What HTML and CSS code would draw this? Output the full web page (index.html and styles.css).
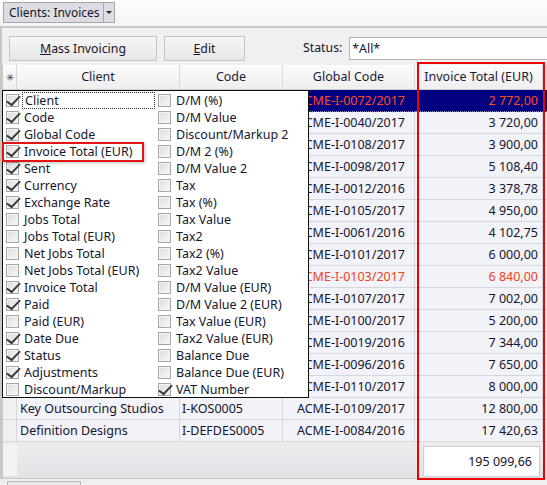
FILE: index.html
```html
<!DOCTYPE html>
<html>
<head>
<meta charset="utf-8">
<link rel="stylesheet" href="styles.css">
</head>
<body>
<div class="app">
  <div class="toolbar">
    <div class="dd"><span class="dd-label">Clients: Invoices</span><span class="dd-btn"><span class="dd-arrow"></span></span></div>
  </div>
  <div class="actions">
    <div class="btn btn-mass"><u>M</u>ass Invoicing</div>
    <div class="btn btn-edit"><u>E</u>dit</div>
    <span class="status-label">Status:</span>
    <div class="status-input">*All*</div>
  </div>
  <div class="grid">
    <div class="row head">
      <div class="c ind">&#x2733;</div>
      <div class="c">Client</div>
      <div class="c">Code</div>
      <div class="c">Global Code</div>
      <div class="c">Invoice Total (EUR)</div>
      <div class="c fill"></div>
    </div>
    <div class="row sel"><div class="c ind"></div><div class="c client"></div><div class="c code"></div><div class="c gc">ACME-I-0072/2017</div><div class="c tot">2 772,00</div><div class="c fill"></div></div>
    <div class="row"><div class="c ind"></div><div class="c client"></div><div class="c code"></div><div class="c gc">ACME-I-0040/2017</div><div class="c tot">3 720,00</div><div class="c fill"></div></div>
    <div class="row"><div class="c ind"></div><div class="c client"></div><div class="c code"></div><div class="c gc">ACME-I-0108/2017</div><div class="c tot">3 900,00</div><div class="c fill"></div></div>
    <div class="row"><div class="c ind"></div><div class="c client"></div><div class="c code"></div><div class="c gc">ACME-I-0098/2017</div><div class="c tot">5 108,40</div><div class="c fill"></div></div>
    <div class="row"><div class="c ind"></div><div class="c client"></div><div class="c code"></div><div class="c gc">ACME-I-0012/2016</div><div class="c tot">3 378,78</div><div class="c fill"></div></div>
    <div class="row"><div class="c ind"></div><div class="c client"></div><div class="c code"></div><div class="c gc">ACME-I-0105/2017</div><div class="c tot">4 950,00</div><div class="c fill"></div></div>
    <div class="row"><div class="c ind"></div><div class="c client"></div><div class="c code"></div><div class="c gc">ACME-I-0061/2016</div><div class="c tot">4 102,75</div><div class="c fill"></div></div>
    <div class="row"><div class="c ind"></div><div class="c client"></div><div class="c code"></div><div class="c gc">ACME-I-0101/2017</div><div class="c tot">6 000,00</div><div class="c fill"></div></div>
    <div class="row due"><div class="c ind"></div><div class="c client"></div><div class="c code"></div><div class="c gc">ACME-I-0103/2017</div><div class="c tot">6 840,00</div><div class="c fill"></div></div>
    <div class="row"><div class="c ind"></div><div class="c client"></div><div class="c code"></div><div class="c gc">ACME-I-0107/2017</div><div class="c tot">7 002,00</div><div class="c fill"></div></div>
    <div class="row"><div class="c ind"></div><div class="c client"></div><div class="c code"></div><div class="c gc">ACME-I-0100/2017</div><div class="c tot">5 200,00</div><div class="c fill"></div></div>
    <div class="row"><div class="c ind"></div><div class="c client"></div><div class="c code"></div><div class="c gc">ACME-I-0019/2016</div><div class="c tot">7 344,00</div><div class="c fill"></div></div>
    <div class="row"><div class="c ind"></div><div class="c client"></div><div class="c code"></div><div class="c gc">ACME-I-0096/2016</div><div class="c tot">7 650,00</div><div class="c fill"></div></div>
    <div class="row"><div class="c ind"></div><div class="c client"></div><div class="c code"></div><div class="c gc">ACME-I-0110/2017</div><div class="c tot">8 000,00</div><div class="c fill"></div></div>
    <div class="row"><div class="c ind"></div><div class="c client">Key Outsourcing Studios</div><div class="c code">I-KOS0005</div><div class="c gc">ACME-I-0109/2017</div><div class="c tot">12 800,00</div><div class="c fill"></div></div>
    <div class="row"><div class="c ind"></div><div class="c client">Definition Designs</div><div class="c code">I-DEFDES0005</div><div class="c gc">ACME-I-0084/2016</div><div class="c tot">17 420,63</div><div class="c fill"></div></div>
    <div class="footer">
      <div class="f-ind"></div>
      <div class="f-space"></div>
      <div class="f-total">195 099,66</div>
    </div>
  </div>
  <div class="hscroll"><div class="thumb"></div></div>

  <div class="popup">
    <div class="item on"><span class="cb"></span><span class="lbl focus">Client</span></div>
    <div class="item on"><span class="cb"></span><span class="lbl">Code</span></div>
    <div class="item on"><span class="cb"></span><span class="lbl">Global Code</span></div>
    <div class="item on"><span class="cb"></span><span class="lbl">Invoice Total (EUR)</span></div>
    <div class="item on"><span class="cb"></span><span class="lbl">Sent</span></div>
    <div class="item on"><span class="cb"></span><span class="lbl">Currency</span></div>
    <div class="item on"><span class="cb"></span><span class="lbl">Exchange Rate</span></div>
    <div class="item"><span class="cb"></span><span class="lbl">Jobs Total</span></div>
    <div class="item"><span class="cb"></span><span class="lbl">Jobs Total (EUR)</span></div>
    <div class="item"><span class="cb"></span><span class="lbl">Net Jobs Total</span></div>
    <div class="item"><span class="cb"></span><span class="lbl">Net Jobs Total (EUR)</span></div>
    <div class="item on"><span class="cb"></span><span class="lbl">Invoice Total</span></div>
    <div class="item on"><span class="cb"></span><span class="lbl">Paid</span></div>
    <div class="item"><span class="cb"></span><span class="lbl">Paid (EUR)</span></div>
    <div class="item on"><span class="cb"></span><span class="lbl">Date Due</span></div>
    <div class="item on"><span class="cb"></span><span class="lbl">Status</span></div>
    <div class="item on"><span class="cb"></span><span class="lbl">Adjustments</span></div>
    <div class="item"><span class="cb"></span><span class="lbl">Discount/Markup</span></div>

    <div class="item"><span class="cb"></span><span class="lbl">D/M (%)</span></div>
    <div class="item"><span class="cb"></span><span class="lbl">D/M Value</span></div>
    <div class="item"><span class="cb"></span><span class="lbl">Discount/Markup 2</span></div>
    <div class="item"><span class="cb"></span><span class="lbl">D/M 2 (%)</span></div>
    <div class="item"><span class="cb"></span><span class="lbl">D/M Value 2</span></div>
    <div class="item"><span class="cb"></span><span class="lbl">Tax</span></div>
    <div class="item"><span class="cb"></span><span class="lbl">Tax (%)</span></div>
    <div class="item"><span class="cb"></span><span class="lbl">Tax Value</span></div>
    <div class="item"><span class="cb"></span><span class="lbl">Tax2</span></div>
    <div class="item"><span class="cb"></span><span class="lbl">Tax2 (%)</span></div>
    <div class="item"><span class="cb"></span><span class="lbl">Tax2 Value</span></div>
    <div class="item"><span class="cb"></span><span class="lbl">D/M Value (EUR)</span></div>
    <div class="item"><span class="cb"></span><span class="lbl">D/M Value 2 (EUR)</span></div>
    <div class="item"><span class="cb"></span><span class="lbl">Tax Value (EUR)</span></div>
    <div class="item"><span class="cb"></span><span class="lbl">Tax2 Value (EUR)</span></div>
    <div class="item"><span class="cb"></span><span class="lbl">Balance Due</span></div>
    <div class="item"><span class="cb"></span><span class="lbl">Balance Due (EUR)</span></div>
    <div class="item on"><span class="cb"></span><span class="lbl">VAT Number</span></div>

    <div class="hl-item"></div>
  </div>
  <div class="hl-col"></div>
</div>
</body>
</html>
```

FILE: styles.css
```css
* { box-sizing: border-box; }
html, body { margin: 0; padding: 0; }
body {
  font-family: "Noto Sans", "Open Sans", sans-serif;
  font-size: 12.5px;
  color: #15152d;
  background: #f0f0f0;
  width: 547px;
  height: 485px;
  overflow: hidden;
}
.app { position: relative; width: 547px; height: 485px; }

/* toolbar */
.toolbar {
  height: 28px;
  background: linear-gradient(#fdfdfd, #f4f4f4);
  border-bottom: 2px solid #c9c9c9;
  padding: 2px 0 0 3px;
}
.dd {
  display: inline-flex;
  height: 21px;
  border: 1px solid #a7a7ab;
  background: #dcdce2;
  font-size: 12px;
}
.dd-label { padding: 0 3px 0 5px; line-height: 19px; }
.dd-btn {
  width: 11px;
  border-left: 1px solid #a7a7ab;
  display: flex; align-items: center; justify-content: center;
}
.dd-arrow {
  width: 0; height: 0;
  border-left: 3px solid transparent;
  border-right: 3px solid transparent;
  border-top: 3px solid #222;
}

/* actions */
.actions {
  height: 37px;
  border-left: 2px solid #c6c6c6;
  background: #f0f0f0;
  display: flex;
  align-items: flex-start;
  padding: 8px 0 0 7px;
}
.btn {
  height: 25px;
  border: 1px solid #c4c4c4;
  background: linear-gradient(#f6f6f6, #e7e7e7);
  display: flex; align-items: center; justify-content: center;
  font-size: 12.3px;
}
.btn-mass { width: 148px; }
.btn-edit { width: 81px; margin-left: 7px; }
.status-label { margin-left: 58px; line-height: 24px; font-size: 12.3px; }
.status-input {
  margin-left: 7px;
  flex: 1;
  height: 23px;
  margin-top: 1px;
  border: 1px solid #b4b4b4;
  border-right: none;
  background: #fff;
  padding-left: 2px;
  line-height: 21px;
  font-size: 12.3px;
}

/* grid */
.grid {
  border-left: 3px solid #c8c8c8;
  background: #eaeaee;
}
.row {
  display: grid;
  grid-template-columns: 14px 163px 103px 132px 128px 1fr;
  height: 22px;
  background: #f2f2f9;
}
.row .c {
  border-right: 1px solid #d6d6de;
  border-bottom: 1px solid #d6d6de;
  white-space: nowrap;
  overflow: hidden;
  line-height: 21px;
}
.row .ind { background: #f0f0f2; }
.row .fill { border-right: none; background: #f0f0f0; }
.client { padding-left: 3px; }
.code { padding-left: 2px; }
.gc { text-align: center; padding-left: 5px; }
.tot { text-align: right; padding-right: 4px; }

.head {
  height: 25px;
  background: linear-gradient(#fbfbfb, #eeeeee);
}
.head .c {
  text-align: center;
  line-height: 24px;
  border-right: 1px solid #d8d8d8;
  border-bottom: 1px solid #cfcfcf;
  color: #1c1c3a;
  padding-left: 0;
}
.head .ind { font-size: 10px; color: #444; background: transparent; }

.sel { background: #000080; }
.sel .c { background: #000080; color: #ff4a1e; border-right-color: #000080; border-bottom: 1px dotted #9090c0; }
.sel .fill { background: #000080; }
.due .c { color: #f2411c; }

.footer {
  height: 37px;
  display: flex;
  border-bottom: 1px solid #c9c9cc;
  background: linear-gradient(#ededf0, #e2e2e6);
}
.f-ind { width: 14px; background: #f3f3f6; margin: 2px 0 2px 0; }
.f-space { width: 406px; }
.f-total {
  width: 117px;
  margin-top: 4px;
  height: 31px;
  background: #fff;
  border: 1px solid #d0d0d4;
  text-align: right;
  padding-right: 7px;
  line-height: 29px;
}

.hscroll { height: 6px; padding: 2px 0 0 7px; background: #f0f0f0; }
.thumb { width: 74px; height: 4px; border: 1px solid #bdbdbd; border-bottom: none; background: #e8e8e8; }

/* popup */
.popup {
  position: absolute;
  left: 2px; top: 90px;
  width: 307px; height: 308px;
  background: #fff;
  border: 1px solid #101010;
  padding-top: 1px;
  display: grid;
  grid-template-columns: 152px 1fr;
  grid-template-rows: repeat(18, 17px);
  grid-auto-flow: column;
}
.item { display: flex; align-items: center; padding-left: 3px; position: relative; }
.cb {
  width: 13px; height: 13px; flex: none;
  border: 1px solid #a6a6a6;
  background: linear-gradient(135deg, #dcdcdc, #f8f8f8);
  box-shadow: inset 0 0 0 1px #f4f4f4;
  position: relative;
}
.item.on .cb::after {
  content: "";
  position: absolute;
  left: 3px; top: -2px;
  width: 5px; height: 11px;
  border-right: 2px solid #3a3a3a;
  border-bottom: 2px solid #3a3a3a;
  transform: rotate(36deg) skewX(-8deg);
  transform-origin: center;
}
.lbl { margin-left: 3px; padding-left: 2px; line-height: 15px; white-space: nowrap; color: #16162e; }
.lbl.focus { flex: 1; border: 1px dotted #333; }

.hl-item {
  position: absolute;
  left: -1px; top: 51px;
  width: 142px; height: 20px;
  border: 2px solid #e31414;
  box-shadow: 1px 1px 3px rgba(0,0,0,0.25);
  pointer-events: none;
}
.hl-col {
  position: absolute;
  left: 417px; top: 62px;
  width: 128px; height: 418px;
  border: 2px solid #f00000;
  pointer-events: none;
}
```
